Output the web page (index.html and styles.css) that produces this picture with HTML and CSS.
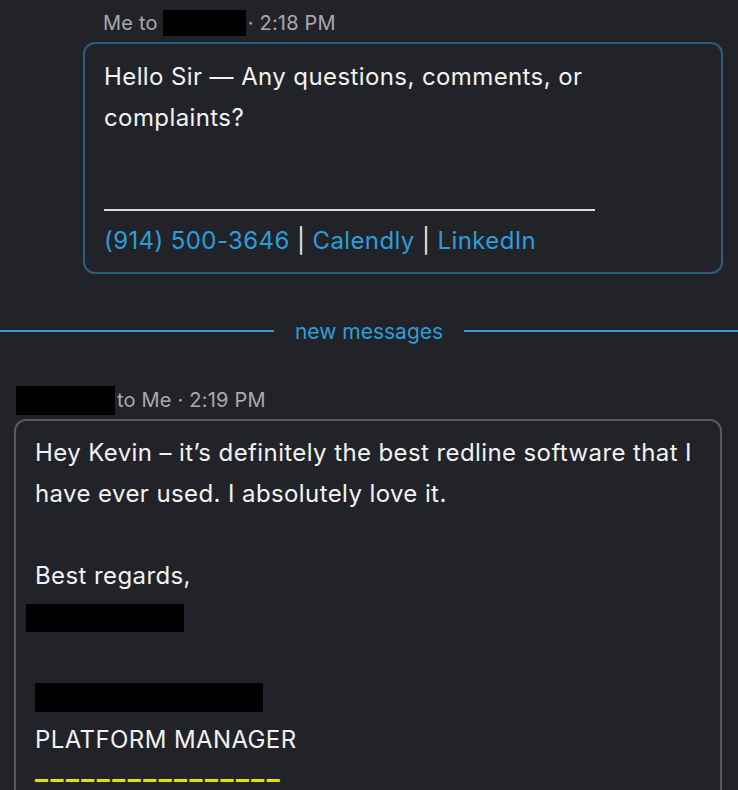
FILE: index.html
```html
<!DOCTYPE html>
<html lang="en">
<head>
  <meta charset="UTF-8">
  <meta name="viewport" content="width=device-width, initial-scale=1.0">
  <title>Thread</title>
  <link rel="stylesheet" href="styles.css">
</head>
<body>
  <div class="thread">
    <div class="msg-head mine">Me to<span class="redact redact-to"></span>· 2:18 PM</div>
    <div class="card card-mine">
      <div class="line">Hello Sir — Any questions, comments, or</div>
      <div class="line">complaints?</div>
      <div class="line"></div>
      <div class="sig-rule"></div>
      <div class="line links">
        <a href="#">(914) 500-3646</a> <span class="pipe">|</span> <a href="#">Calendly</a> <span class="pipe">|</span> <a href="#">LinkedIn</a>
      </div>
    </div>

    <div class="divider">
      <span class="rule"></span>
      <span class="divider-label">new messages</span>
      <span class="rule"></span>
    </div>

    <div class="msg-head theirs"><span class="redact redact-from"></span>to Me · 2:19 PM</div>
    <div class="card card-theirs">
      <div class="line">Hey Kevin – it’s definitely the best redline software that I</div>
      <div class="line">have ever used. I absolutely love it.</div>
      <div class="line"></div>
      <div class="line">Best regards,</div>
      <div class="line"><span class="redact redact-name"></span></div>
      <div class="line"></div>
      <div class="line"><span class="redact redact-title"></span></div>
      <div class="line">PLATFORM MANAGER</div>
      <div class="line dashes">________________</div>
    </div>
  </div>
</body>
</html>
```

FILE: styles.css
```css
body {
  margin: 0;
  background: #222329;
  font-family: 'Inter', 'Roboto', 'Liberation Sans', sans-serif;
  color: #f2f2f2;
  overflow: hidden;
  height: 790px;
}

.thread {
  display: flex;
  flex-direction: column;
}

.msg-head {
  font-size: 20px;
  line-height: 26px;
  letter-spacing: 0.2px;
  color: #a9a9ad;
  white-space: nowrap;
}

.msg-head.mine {
  margin: 10px 0 6px 103px;
  height: 26px;
}

.msg-head.theirs {
  margin: 43px 0 4px 16px;
  height: 29px;
  line-height: 29px;
}

.redact {
  display: inline-block;
  background: #000;
  vertical-align: middle;
}

.redact-to {
  width: 83px;
  height: 26px;
  margin: 0 2px 0 5px;
  vertical-align: top;
}

.redact-from {
  width: 99px;
  height: 29px;
  margin-right: 2px;
  vertical-align: top;
}

.redact-name {
  width: 158px;
  height: 28px;
  margin-left: -9px;
}

.redact-title {
  width: 228px;
  height: 29px;
  margin-top: -6px;
}

.card {
  box-sizing: border-box;
  border: 2px solid;
  border-radius: 12px;
  font-size: 24px;
  letter-spacing: 0.4px;
}

.card .line {
  height: 41px;
  line-height: 41px;
  white-space: nowrap;
}

.card-mine {
  margin-left: 83px;
  width: 640px;
  border-color: #2d5b82;
  padding: 12px 20px 11px 19px;
}

.card-theirs {
  margin-left: 14px;
  width: 708px;
  border-color: #58595e;
  padding: 11px 20px 20px 19px;
}

.sig-rule {
  width: 491px;
  height: 30px;
  border-bottom: 2px solid #dcdcdc;
  margin-bottom: 9px;
}

.links a {
  color: #2c9ed9;
  text-decoration: none;
}

.pipe {
  color: #e6e6e6;
}

.divider {
  display: flex;
  align-items: center;
  gap: 21px;
  height: 24px;
  margin-top: 45px;
}

.divider .rule {
  flex: 1;
  height: 2px;
  background: #2c9ed9;
}

.divider-label {
  font-size: 21px;
  color: #2c9ed9;
}

.card .dashes {
  height: 30px;
  line-height: 20px;
  font-size: 27px;
  font-weight: 700;
  color: #e5e000;
  letter-spacing: 2.6px;
  text-shadow: 0 0 1px #555;
}
```
